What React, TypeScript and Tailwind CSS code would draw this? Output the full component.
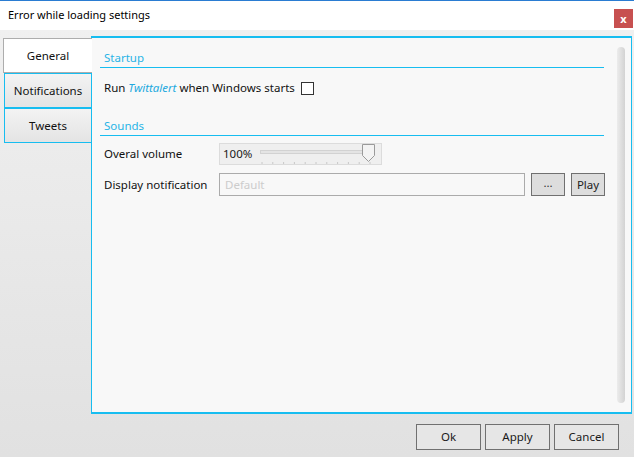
import React from "react";

const font = { fontFamily: '"Noto Sans", "Open Sans", sans-serif' };

function VolumeSlider() {
  // ticks along the track
  const ticks = Array.from({ length: 11 }, (_, i) => 2 + i * 10.8);
  return (
    <div className="flex h-[22px] w-[163px] items-center border border-[#dcdcdc] bg-[#efefef] pl-[3px]">
      <span className="w-[37px] text-[#1a1a1a]">100%</span>
      <svg width="118" height="22" viewBox="0 0 118 22" className="-mt-px">
        <rect x="0.5" y="7.5" width="112" height="3" fill="#e4e4e4" stroke="#d2d2d2" />
        {ticks.map((t) => (
          <line key={t} x1={t} x2={t} y1="19" y2="21" stroke="#c8c8c8" />
        ))}
        <path d="M102.5 1.5 H114.5 V12.5 L108.5 18.5 L102.5 12.5 Z" fill="#f3f3f3" stroke="#9a9a9a" />
      </svg>
    </div>
  );
}

function SectionHeader({ title }: { title: string }) {
  return (
    <div className="mr-px border-b border-[#17bdf0] pl-[4px] text-[11.5px] leading-[18px] text-[#28b4e6]">
      {title}
    </div>
  );
}

export default function App() {
  return (
    <div className="h-[463px] w-[634px] bg-white text-[11.5px] text-[#111]" style={font}>
      <div className="flex h-[457px] flex-col border-t border-[#2a7cd2] bg-gradient-to-b from-[#f1f1f1] to-[#e1e1e1]">
        {/* title bar */}
        <div className="flex h-[29px] items-center justify-between bg-white pl-[8px]">
          <span className="pb-px text-[11px] text-black">Error while loading settings</span>
          <div className="mt-[5px] mr-px flex h-[19px] w-[19px] items-center justify-center bg-[#c75050] text-[11px] font-bold leading-none text-white">
            x
          </div>
        </div>

        {/* body */}
        <div className="flex pt-[6px] pr-[2px]">
          <div className="relative z-10 flex w-[91px] flex-col pt-[2px]">
            <div className="ml-[3px] flex h-[35px] w-[89px] items-center justify-center border-y border-l border-[#adadad] bg-white">
              General
            </div>
            <div className="ml-[4px] flex h-[35px] w-[88px] items-center justify-center border border-[#17bdf0] bg-gradient-to-b from-[#f3f3f3] to-[#e4e4e4]">
              Notifications
            </div>
            <div className="ml-[4px] flex h-[35px] w-[88px] items-center justify-center border border-[#17bdf0] bg-gradient-to-b from-[#f3f3f3] to-[#e4e4e4]">
              Tweets
            </div>
          </div>

          <div className="flex h-[378px] flex-1 border-x border-t-2 border-b-2 border-[#17bdf0] bg-[#f8f8f8]">
            <div className="flex w-[513px] shrink-0 flex-col pl-[8px] pt-[11px]">
              <SectionHeader title="Startup" />
              <div className="mt-[10px] flex h-[20px] items-center gap-[6px] pl-[4px]">
                <span>
                  Run <span className="italic text-[#22a9de]">Twittalert</span> when Windows starts
                </span>
                <span className="h-[13px] w-[13px] border border-[#333] bg-white" />
              </div>

              <div className="mt-[19px]">
                <SectionHeader title="Sounds" />
              </div>
              <div className="mt-[7px] flex items-center pl-[4px]">
                <span className="w-[115px]">Overal volume</span>
                <VolumeSlider />
              </div>
              <div className="mt-[8px] flex items-center pl-[4px]">
                <span className="w-[115px] shrink-0">Display notification</span>
                <div className="flex h-[23px] w-[306px] shrink-0 items-center border border-[#ababab] bg-[#f8f8f8] pl-[5px] text-[#cccccc]">
                  Default
                </div>
                <div className="ml-[6px] flex h-[23px] w-[34px] shrink-0 items-center justify-center border border-[#707070] bg-[#dddddd] pb-[4px] text-[#333]">
                  ...
                </div>
                <div className="ml-[6px] flex h-[23px] w-[34px] shrink-0 items-center justify-center border border-[#707070] bg-[#dddddd] text-[#222]">
                  Play
                </div>
              </div>
            </div>
            <div className="ml-[12px] mt-[9px] mb-[9px] w-[8px] rounded-full bg-gradient-to-r from-[#ececec] to-[#d3d3d3]" />
          </div>
        </div>

        {/* footer buttons */}
        <div className="mt-[10px] flex justify-end gap-[4px] pr-[15px]">
          {["Ok", "Apply", "Cancel"].map((b) => (
            <div
              key={b}
              className="flex h-[26px] w-[65px] items-center justify-center border border-[#707070] bg-[#e6e6e6] text-[#1a1a1a]"
            >
              {b}
            </div>
          ))}
        </div>
      </div>
    </div>
  );
}
